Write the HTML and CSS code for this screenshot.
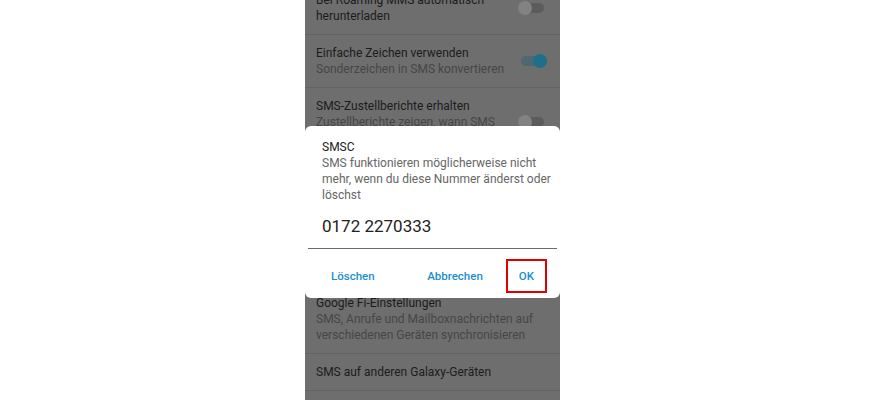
FILE: index.html
```html
<!DOCTYPE html>
<html lang="de">
<head>
  <meta charset="UTF-8" />
  <meta name="viewport" content="width=device-width, initial-scale=1.0"/>
  <title>SMSC</title>
  <link rel="stylesheet" href="styles.css">
</head>
<body>

  <div class="phone">
    <ul class="settings">
      <li class="item">
        <div class="text">
          <p class="title">Bei Roaming MMS automatisch herunterladen</p>
        </div>
        <span class="switch"></span>
      </li>
      <li class="item">
        <div class="text">
          <p class="title">Einfache Zeichen verwenden</p>
          <p class="sub">Sonderzeichen in SMS konvertieren</p>
        </div>
        <span class="switch on"></span>
      </li>
      <li class="item">
        <div class="text">
          <p class="title">SMS-Zustellberichte erhalten</p>
          <p class="sub">Zustellberichte zeigen, wann SMS zugestellt wurden</p>
        </div>
        <span class="switch"></span>
      </li>
      <li class="item">
        <div class="text">
          <p class="title">SMSC</p>
          <p class="sub">0172 2270333</p>
        </div>
      </li>
      <li class="item tall">
        <div class="text">
          <p class="title">Nachrichtenzentrale</p>
          <p class="sub">Netzwerk-Einstellungen für Textnachrichten</p>
        </div>
      </li>
      <li class="item">
        <div class="text">
          <p class="title">Google Fi-Einstellungen</p>
          <p class="sub">SMS, Anrufe und Mailboxnachrichten auf verschiedenen Geräten synchronisieren</p>
        </div>
      </li>
      <li class="item">
        <div class="text">
          <p class="title">SMS auf anderen Galaxy-Geräten</p>
        </div>
      </li>
    </ul>

    <div class="dialog">
      <h2>SMSC</h2>
      <p class="message">SMS funktionieren möglicherweise nicht mehr, wenn du diese Nummer änderst oder löschst</p>
      <input class="number" type="text" value="0172 2270333">
      <div class="actions">
        <button class="btn">Löschen</button>
        <span class="spacer"></span>
        <button class="btn">Abbrechen</button>
        <button class="btn marked">OK</button>
      </div>
    </div>
  </div>

</body>
</html>
```

FILE: styles.css
```css
* { margin: 0; padding: 0; box-sizing: border-box; }
body {
  font-family: Roboto, 'Noto Sans', sans-serif;
  background: #fff;
  width: 879px;
  height: 400px;
  overflow: hidden;
}

.phone {
  position: relative;
  width: 255px;
  height: 400px;
  margin-left: 305px;
  background: #6e6e6e;
  overflow: hidden;
}

/* Einstellungsliste (abgedunkelt) */
.settings {
  list-style: none;
  margin-top: -18px;
}

.item {
  display: flex;
  align-items: center;
  gap: 12px;
  padding: 10px 13px 10px 11px;
  border-bottom: 1px solid #636363;
}

.item.tall {
  padding: 13px 13px 13px 11px;
}

.text {
  flex: 1;
  font-size: 12px;
  line-height: 16px;
}

.title { color: #1c1c1c; }
.sub { color: #464646; }

.switch {
  position: relative;
  flex: none;
  width: 29px;
  height: 14px;
}

.switch::before {
  content: "";
  position: absolute;
  left: 3px;
  top: 2px;
  width: 23px;
  height: 10px;
  border-radius: 5px;
  background: #5c5c5c;
}

.switch::after {
  content: "";
  position: absolute;
  left: 0;
  top: 0;
  width: 14px;
  height: 14px;
  border-radius: 50%;
  background: #828282;
}

.switch.on::before { background: #4f6770; }
.switch.on::after {
  left: 15px;
  background: #1f6e8b;
}

/* Dialog */
.dialog {
  position: absolute;
  top: 126px;
  left: 0;
  right: 0;
  background: #fff;
  border-radius: 6px;
  padding: 13px 3px 5px;
}

.dialog h2 {
  font-size: 12px;
  font-weight: normal;
  line-height: 16px;
  color: #202020;
  padding: 0 14px;
}

.message {
  font-size: 12px;
  line-height: 16px;
  color: #666;
  padding: 0 6px 0 14px;
}

.number {
  display: block;
  width: 100%;
  margin-top: 11px;
  padding: 2px 14px 12px;
  border: none;
  border-bottom: 1.5px solid #6a6a6a;
  font-family: inherit;
  font-size: 17px;
  color: #222;
  outline: none;
}

.actions {
  display: flex;
  align-items: center;
  margin-top: 10px;
  padding: 0 10px;
}

.spacer { flex: 1; }

.btn {
  height: 34px;
  padding: 0 11px;
  background: none;
  border: 2px solid transparent;
  font-family: inherit;
  font-size: 11.5px;
  font-weight: 500;
  color: #1a8fcf;
  cursor: pointer;
}

.btn + .btn { margin-left: 10px; }

.marked {
  border-color: #e00000;
}
```
